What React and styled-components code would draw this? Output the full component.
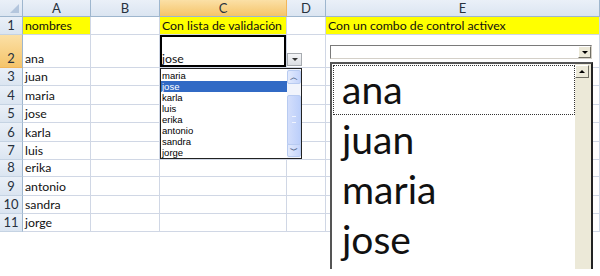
import React from 'react'
import styled, { createGlobalStyle, css } from 'styled-components'

const GlobalStyle = createGlobalStyle`
  html, body { margin: 0; padding: 0; background: #fff; overflow: hidden; }
  body { width: 600px; height: 276px; }
`

const cols = [23, 68, 69, 127, 39, 274]
const rowHeights = [18, 33, 18, 19, 18, 19, 18, 17, 19, 18, 18]
const names = ['ana', 'juan', 'maria', 'jose', 'karla', 'luis', 'erika', 'antonio', 'sandra', 'jorge']

const Page = styled.div`
  position: relative;
  width: 600px;
  height: 276px;
  overflow: hidden;
  font-family: Lato, "Open Sans", sans-serif;
`

const Sheet = styled.div`
  display: grid;
  grid-template-columns: ${cols.map(c => c + 'px').join(' ')};
  grid-template-rows: 17px ${rowHeights.map(h => h + 'px').join(' ')};
`

const headBg = css`
  background: linear-gradient(#eaf0f8, #dbe5f1);
`
const activeBg = css`
  background: linear-gradient(#fbe0a6, #f5c46a);
`

const Corner = styled.div`
  ${headBg};
  box-sizing: border-box;
  border-right: 1px solid #9eb6ce;
  border-bottom: 1px solid #9eb6ce;
  position: relative;
  &::after {
    content: '';
    position: absolute;
    right: 3px;
    bottom: 3px;
    border-left: 9px solid transparent;
    border-bottom: 9px solid #b4c6dd;
  }
`

const ColHead = styled.div`
  ${p => (p.$active ? activeBg : headBg)};
  box-sizing: border-box;
  border-right: 1px solid ${p => (p.$active ? '#f2b65a' : '#9eb6ce')};
  border-bottom: 1px solid #9eb6ce;
  display: flex;
  align-items: center;
  justify-content: center;
  font-size: 13px;
  color: #27313d;
`

const RowHead = styled.div`
  ${p => (p.$active ? activeBg : headBg)};
  box-sizing: border-box;
  border-right: 1px solid #9eb6ce;
  border-bottom: 1px solid ${p => (p.$active ? '#f2b65a' : '#c5d3e3')};
  display: flex;
  align-items: flex-end;
  justify-content: center;
  padding-bottom: 1px;
  font-size: 13px;
  color: #27313d;
`

const Cell = styled.div`
  box-sizing: border-box;
  border-right: 1px solid #d0d7e5;
  border-bottom: 1px solid #d0d7e5;
  background: ${p => (p.$fill ? '#ffff00' : '#fff')};
  display: flex;
  align-items: flex-end;
  padding: 0 0 1px 2px;
  font-size: 12.3px;
  color: #111;
  white-space: nowrap;
  overflow: visible;
  position: relative;
  ${p => p.$selected && css`box-shadow: inset 0 0 0 2px #000;`}
`

const DropButton = styled.div`
  position: absolute;
  left: 287px;
  top: 53px;
  width: 15px;
  height: 13px;
  box-sizing: border-box;
  border: 1px solid #a7abb0;
  background: linear-gradient(#f4f5f7, #dcdfe4);
  display: flex;
  align-items: center;
  justify-content: center;
  &::after {
    content: '';
    border-left: 3px solid transparent;
    border-right: 3px solid transparent;
    border-top: 3px solid #333;
  }
`

const ListBox = styled.div`
  position: absolute;
  left: 160px;
  top: 68px;
  width: 142px;
  height: 91px;
  box-sizing: border-box;
  border: 1px solid #222;
  background: #fff;
  display: flex;
`

const Items = styled.div`
  flex: 1;
  padding-top: 1px;
  font-family: "Liberation Sans", Arial, sans-serif;
  font-size: 9.5px;
`

const Item = styled.div`
  height: 11px;
  line-height: 11px;
  padding-left: 1px;
  color: ${p => (p.$sel ? '#fff' : '#000')};
  background: ${p => (p.$sel ? '#316ac5' : 'transparent')};
`

const XpScroll = styled.div`
  width: 14px;
  background: #f1f4fc;
  display: flex;
  flex-direction: column;
  justify-content: space-between;
  position: relative;
`

const XpButton = styled.div`
  height: 12px;
  margin: 1px 0;
  border: 1px solid #b8cbf1;
  border-radius: 2px;
  background: linear-gradient(90deg, #e2eafd, #c6d5fb);
  display: flex;
  align-items: center;
  justify-content: center;
  color: #4d6185;
  font-size: 8px;
  font-weight: bold;
  font-family: "DejaVu Sans", sans-serif;
`

const XpThumb = styled.div`
  position: absolute;
  left: 0;
  right: 0;
  top: 26px;
  height: 48px;
  border: 1px solid #b8cbf1;
  border-radius: 2px;
  background: linear-gradient(90deg, #d3defb, #bccffa);
  &::after {
    content: '';
    position: absolute;
    left: 4px;
    right: 4px;
    top: 20px;
    height: 5px;
    border-top: 1px solid #eef3ff;
    border-bottom: 1px solid #eef3ff;
  }
`

const Combo = styled.div`
  position: absolute;
  left: 330px;
  top: 45px;
  width: 262px;
  height: 14px;
  box-sizing: border-box;
  border: 1px solid #7a7a7a;
  border-right-color: #d4d0c8;
  border-bottom-color: #d4d0c8;
  background: #fff;
  display: flex;
  justify-content: flex-end;
`

const ClassicButton = styled.div`
  width: 13px;
  box-sizing: border-box;
  background: #ece9d8;
  border: 1px solid;
  border-color: #fff #716f64 #716f64 #fff;
  display: flex;
  align-items: center;
  justify-content: center;
  &::after {
    content: '';
    border-left: 3px solid transparent;
    border-right: 3px solid transparent;
    ${p => (p.$up ? 'border-bottom: 3px solid #000;' : 'border-top: 3px solid #000;')}
  }
`

const BigList = styled.div`
  position: absolute;
  left: 330px;
  top: 62px;
  width: 263px;
  height: 207px;
  box-sizing: border-box;
  border-left: 2px solid #555;
  border-top: 2px solid #555;
  border-right: 2px solid #222;
  background: #fff;
  display: flex;
  overflow: hidden;
`

const BigItems = styled.div`
  flex: 1;
  padding: 1px 0 0 1px;
`

const BigItem = styled.div`
  height: 50px;
  box-sizing: border-box;
  padding-left: 8px;
  font-family: Lato, "Open Sans", sans-serif;
  font-size: 39px;
  line-height: 46px;
  color: #111;
  border: 1px dotted ${p => (p.$focus ? '#333' : 'transparent')};
`

const ClassicScroll = styled.div`
  width: 15px;
  background: #ece9d8;
  display: flex;
  flex-direction: column;
  padding: 1px 1px 0 0;
  & > div { height: 13px; width: 14px; }
`

export default function App() {
  const headers = ['A', 'B', 'C', 'D', 'E']
  const rows = []
  for (let r = 0; r < 11; r++) {
    const n = r + 1
    let a = '', c = '', e = ''
    if (n === 1) { a = 'nombres'; c = 'Con lista de validación'; e = 'Con un combo de control activex' }
    else { a = names[n - 2] }
    if (n === 2) c = 'jose'
    rows.push(
      <React.Fragment key={n}>
        <RowHead $active={n === 2}>{n}</RowHead>
        <Cell $fill={n === 1}>{a}</Cell>
        <Cell />
        <Cell $fill={n === 1} $selected={n === 2}>{c}</Cell>
        <Cell />
        <Cell $fill={n === 1}>{e}</Cell>
      </React.Fragment>
    )
  }

  return (
    <Page>
      <GlobalStyle />
      <Sheet>
        <Corner />
        {headers.map(h => <ColHead key={h} $active={h === 'C'}>{h}</ColHead>)}
        {rows}
      </Sheet>

      <DropButton />
      <ListBox>
        <Items>
          {names.slice(2).map(n => <Item key={n} $sel={n === 'jose'}>{n}</Item>)}
        </Items>
        <XpScroll>
          <XpButton>︿</XpButton>
          <XpThumb />
          <XpButton>﹀</XpButton>
        </XpScroll>
      </ListBox>

      <Combo><ClassicButton /></Combo>
      <BigList>
        <BigItems>
          {names.slice(0, 4).map(n => <BigItem key={n} $focus={n === 'ana'}>{n}</BigItem>)}
        </BigItems>
        <ClassicScroll><ClassicButton $up /></ClassicScroll>
      </BigList>
    </Page>
  )
}
